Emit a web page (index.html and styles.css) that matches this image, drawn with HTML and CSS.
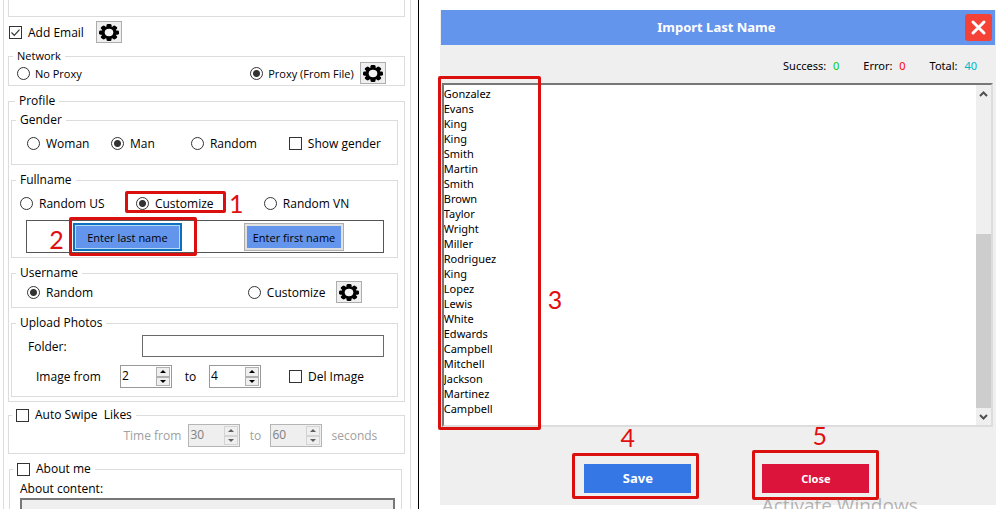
FILE: index.html
```
<!DOCTYPE html>
<html lang="en">
<head>
  <meta charset="UTF-8">
  <title>Import Last Name</title>
  <link rel="stylesheet" href="styles.css">
</head>
<body>

<!-- gear icon shared by the settings buttons -->
<svg width="0" height="0" class="sprite" aria-hidden="true">
  <symbol id="gear" viewBox="0 0 20 20" preserveAspectRatio="none">
    <g fill="#000">
      <rect x="7.500" y="0" width="5" height="20" rx="1.500"/>
      <rect x="7.500" y="0" width="5" height="20" rx="1.500" transform="rotate(45 10 10)"/>
      <rect x="7.500" y="0" width="5" height="20" rx="1.500" transform="rotate(90 10 10)"/>
      <rect x="7.500" y="0" width="5" height="20" rx="1.500" transform="rotate(135 10 10)"/>
      <circle cx="10" cy="10" r="7.500"/>
    </g>
    <circle cx="10" cy="10" r="4.300" fill="#f4f4f4"/>
  </symbol>
</svg>

<div class="page">
  <main class="settings">
    <div class="settings-inner">
      <div class="group-end"></div>

      <div class="email-row">
        <label><input type="checkbox" checked> Add Email</label>
        <button class="gear" aria-label="Email settings"><svg><use href="#gear"/></svg></button>
      </div>

      <fieldset class="network">
        <legend>Network</legend>
        <div class="network-row">
          <label><input type="radio" name="proxy"> No Proxy</label>
          <label><input type="radio" name="proxy" checked> Proxy (From File)</label>
          <button class="gear" aria-label="Proxy settings"><svg><use href="#gear"/></svg></button>
        </div>
      </fieldset>

      <fieldset class="profile">
        <legend>Profile</legend>

        <fieldset>
          <legend>Gender</legend>
          <div class="gender-row">
            <label><input type="radio" name="gender"> Woman</label>
            <label><input type="radio" name="gender" checked> Man</label>
            <label><input type="radio" name="gender"> Random</label>
            <label><input type="checkbox"> Show gender</label>
          </div>
        </fieldset>

        <fieldset>
          <legend>Fullname</legend>
          <div class="fullname-row">
            <label><input type="radio" name="fullname"> Random US</label>
            <label class="marked mark-1"><input type="radio" name="fullname" checked> Customize<span class="step">1</span></label>
            <label><input type="radio" name="fullname"> Random VN</label>
          </div>
          <div class="name-box">
            <div class="marked mark-2">
              <button class="name-btn active">Enter last name</button>
              <span class="step">2</span>
            </div>
            <button class="name-btn">Enter first name</button>
          </div>
        </fieldset>

        <fieldset>
          <legend>Username</legend>
          <div class="username-row">
            <label><input type="radio" name="username" checked> Random</label>
            <label><input type="radio" name="username"> Customize</label>
            <button class="gear" aria-label="Username settings"><svg><use href="#gear"/></svg></button>
          </div>
        </fieldset>

        <fieldset class="upload">
          <legend>Upload Photos</legend>
          <div class="folder-row">
            <label for="folder">Folder:</label>
            <input type="text" id="folder">
          </div>
          <div class="image-row">
            <label for="imgFrom">Image from</label>
            <div class="spinner">
              <input type="text" id="imgFrom" value="2">
              <div class="spin-btns"><button class="up" aria-label="Up"></button><button class="down" aria-label="Down"></button></div>
            </div>
            <label for="imgTo" class="to">to</label>
            <div class="spinner">
              <input type="text" id="imgTo" value="4">
              <div class="spin-btns"><button class="up" aria-label="Up"></button><button class="down" aria-label="Down"></button></div>
            </div>
            <label class="del"><input type="checkbox"> Del Image</label>
          </div>
        </fieldset>
      </fieldset>

      <fieldset class="swipe">
        <legend><label><input type="checkbox"> Auto Swipe&nbsp; Likes</label></legend>
        <div class="swipe-row">
          <label for="timeFrom">Time from</label>
          <div class="spinner disabled">
            <input type="text" id="timeFrom" value="30" disabled>
            <div class="spin-btns"><button class="up" aria-label="Up" disabled></button><button class="down" aria-label="Down" disabled></button></div>
          </div>
          <label for="timeTo" class="to">to</label>
          <div class="spinner disabled">
            <input type="text" id="timeTo" value="60" disabled>
            <div class="spin-btns"><button class="up" aria-label="Up" disabled></button><button class="down" aria-label="Down" disabled></button></div>
          </div>
          <span class="seconds">seconds</span>
        </div>
      </fieldset>

      <fieldset class="about">
        <legend><label><input type="checkbox"> About me</label></legend>
        <label for="about">About content:</label>
        <textarea id="about" disabled></textarea>
      </fieldset>
    </div>
  </main>

  <section class="import">
    <div class="window">
      <header class="title-bar">
        <h1>Import Last Name</h1>
        <button class="close-x" aria-label="Close window">
          <svg viewBox="0 0 27 27"><path d="M8 8L19 19M19 8L8 19" stroke="#fff" stroke-width="3" stroke-linecap="round"/></svg>
        </button>
      </header>

      <div class="stats">
        <div>Success: <span class="success">0</span></div>
        <div>Error: <span class="error">0</span></div>
        <div>Total: <span class="total">40</span></div>
      </div>

      <div class="list">
        <div class="marked mark-3"><span class="step">3</span></div>
        <textarea rows="22" aria-label="Last names">Gonzalez
Evans
King
King
Smith
Martin
Smith
Brown
Taylor
Wright
Miller
Rodriguez
King
Lopez
Lewis
White
Edwards
Campbell
Mitchell
Jackson
Martinez
Campbell</textarea>
        <div class="scrollbar">
          <button aria-label="Scroll up"><svg viewBox="0 0 15 17"><path d="M4 11L7.500 7.500L11 11" fill="none" stroke="#505050" stroke-width="2"/></svg></button>
          <div class="track"><div class="thumb"></div></div>
          <button aria-label="Scroll down"><svg viewBox="0 0 15 17"><path d="M4 7L7.500 10.500L11 7" fill="none" stroke="#505050" stroke-width="2"/></svg></button>
        </div>
      </div>

      <footer class="actions">
        <div class="marked mark-4">
          <button class="save">Save</button>
          <span class="step">4</span>
        </div>
        <div class="marked mark-5">
          <button class="close">Close</button>
          <span class="step">5</span>
        </div>
      </footer>
    </div>
    <div class="watermark">Activate Windows</div>
  </section>
</div>

</body>
</html>
```
FILE: styles.css
```
* {
  box-sizing: border-box;
}

body {
  margin: 0;
  background: #fff;
  color: #000;
  font-family: "Open Sans", "Noto Sans", sans-serif;
  font-size: 12px;
  line-height: 15px;
}

button, input, textarea {
  margin: 0;
  font: inherit;
  color: inherit;
}

button {
  padding: 0;
}

.sprite {
  position: absolute;
}

.page {
  display: grid;
  grid-template-columns: 5fr 7fr;
  height: 100vh;
  overflow: hidden;
}

/* Left settings panel */
.settings {
  padding: 0 7px 0 3px;
  border-right: 1px solid #000;
  overflow: hidden;
}

.settings-inner {
  min-height: 100vh;
  padding: 0 5px 0 4px;
  border: solid #dcdcdc;
  border-width: 0 1px;
}

fieldset {
  min-width: 0;
  margin: 9px 0 0;
  padding: 0;
  border: 1px solid #dcdcdc;
}

legend {
  height: 12px;
  margin-left: 4px;
  padding: 0 4px;
  line-height: 12px;
}

label {
  display: flex;
  align-items: center;
  gap: 6px;
  white-space: nowrap;
}

legend label {
  height: 12px;
}

input[type="radio"], input[type="checkbox"] {
  appearance: none;
  flex: none;
  width: 13px;
  height: 13px;
  border: 1px solid #333;
  background: #fff;
}

input[type="radio"] {
  border-radius: 50%;
}

input[type="radio"]:checked {
  background: radial-gradient(circle, #333 0 3px, #fff 4px);
}

input[type="checkbox"]:checked {
  background: #fff url("data:image/svg+xml,%3Csvg xmlns='http://www.w3.org/2000/svg' viewBox='0 0 11 11'%3E%3Cpath d='M1.500 5.500l2.800 2.800l5.200-5.600' fill='none' stroke='%23333' stroke-width='1.200'/%3E%3C/svg%3E");
}

.gear {
  width: 26px;
  height: 22px;
  border: 1px solid #adadad;
  background: #efefef;
}

.gear svg {
  display: block;
  width: 20px;
  height: 17px;
  margin: auto;
}

.group-end {
  height: 17px;
  border: 1px solid #dcdcdc;
  border-top: 0;
}

.email-row {
  display: flex;
  gap: 12px;
  margin-top: 4px;
  padding-left: 1px;
}

.network {
  margin-top: 7px;
  font-size: 11px;
}

.network-row {
  display: grid;
  grid-template-columns: 1fr auto auto;
  gap: 6px;
  padding: 0 18px 1px 8px;
}

.network-row label {
  gap: 5px;
}

.profile {
  padding: 0 6px 4px 2px;
}

.profile fieldset:nth-of-type(1) {
  margin-top: 7px;
}

.gender-row {
  display: grid;
  grid-template-columns: 84fr 80fr 98fr 108fr;
  height: 38px;
  padding: 0 0 4px 15px;
}

.fullname-row {
  display: grid;
  grid-template-columns: 116fr 128fr 133fr;
  height: 34px;
  padding-left: 8px;
}

.fullname-row label {
  justify-self: start;
}

.name-box {
  display: flex;
  justify-content: space-between;
  margin: 0 13px 4px 14px;
  padding: 2px 10% 1px 12%;
  border: 1px solid #555;
}

.name-btn {
  display: block;
  height: 28px;
  padding: 0 8px;
  border: 1px solid #adadad;
  outline: 2px solid #e1e1e1;
  outline-offset: -3px;
  background: #6495ed;
  font-size: 11px;
}

.name-btn.active {
  padding: 0 12px;
  border: 2px solid #0f6fbf;
  outline: 1px solid #b8dcf4;
  outline-offset: -3px;
}

.username-row {
  display: grid;
  grid-template-columns: 221fr 88fr 61fr;
  padding: 2px 0 4px 15px;
}

.upload {
  padding: 0 13px 8px 16px;
}

.upload legend {
  margin-left: -12px;
}

.folder-row {
  display: grid;
  grid-template-columns: 32% 1fr;
  margin-top: 6px;
}

.folder-row input {
  width: 100%;
  height: 22px;
  border: 1px solid #6a6a6a;
}

.image-row, .swipe-row {
  display: flex;
  align-items: center;
}

.image-row {
  margin-top: 8px;
  padding-left: 8px;
}

.image-row > label:first-child {
  flex: 0 0 84px;
}

.to {
  flex: 0 0 37px;
  justify-content: center;
}

.del {
  margin-left: 28px;
}

.spinner {
  display: flex;
  width: 52px;
  height: 23px;
  border: 1px solid #999;
  background: #fff;
}

.spinner input {
  flex: 1;
  min-width: 0;
  height: 18px;
  padding: 0 1px;
  border: 0;
  background: transparent;
}

.spin-btns {
  display: grid;
  width: 16px;
  padding: 1px;
}

.spin-btns button {
  display: grid;
  place-items: center;
  border: 1px solid #b0b0b0;
  background: #efefef;
}

.spin-btns button::before {
  content: "";
  border: solid transparent;
  border-width: 0 3px;
}

.spin-btns .up::before {
  border-bottom: 3px solid #000;
}

.spin-btns .down::before {
  border-top: 3px solid #000;
}

.spinner.disabled {
  border-color: #b5b5b5;
  background: #efefef;
  color: #808080;
}

.spinner.disabled button {
  border-color: #d4d4d4;
}

.spinner.disabled button::before {
  opacity: 0.6;
}

.swipe {
  margin-top: 7px;
}

.swipe legend {
  margin-left: 3px;
}

.swipe-row {
  padding: 3px 0 6px 29%;
  color: #a0a0a0;
}

.swipe-row > label:first-child {
  flex: 0 0 65px;
}

.swipe-row .to {
  flex-basis: 30px;
}

.seconds {
  margin-left: 9px;
}

.about {
  margin: 9px 3px 0 1px;
  padding: 6px 6px 0 10px;
}

.about legend {
  margin-left: -7px;
}

.about textarea {
  display: block;
  width: 100%;
  height: 40px;
  margin-top: 2px;
  border: 2px solid #777;
  background: #efefef;
  resize: none;
}

/* Import window */
.import {
  position: relative;
  padding: 10px 9px 0 21px;
}

.window {
  padding: 0 1px;
  background: #efefef;
}

.title-bar {
  display: flex;
  align-items: center;
  height: 35px;
  padding-right: 3px;
  background: #6495ed;
}

h1 {
  flex: 1;
  margin: 0;
  padding-left: 27px;
  color: #fff;
  font-family: "Noto Sans", sans-serif;
  font-size: 13px;
  text-align: center;
}

.close-x {
  width: 27px;
  height: 27px;
  border: 0;
  border-radius: 3px;
  background: #f44336;
}

.close-x svg {
  display: block;
}

.stats {
  display: flex;
  justify-content: flex-end;
  gap: 24px;
  height: 38px;
  padding: 13px 18px 0 0;
  font-family: "Noto Sans", sans-serif;
  font-size: 11px;
}

.stats span {
  margin-left: 4px;
}

.success {
  color: #0c1;
}

.error {
  color: #f00;
}

.total {
  color: #00b7c3;
}

.list {
  position: relative;
  display: flex;
  margin: 0 2px 0 1px;
  border: 2px solid #777;
  border-color: #777 #ddd #ddd #777;
  background: #fff;
}

.list textarea {
  flex: 1;
  min-width: 0;
  padding: 1px 0 9px;
  border: 0;
  outline: 0;
  background: transparent;
  font-family: "Noto Sans", sans-serif;
  font-size: 11px;
  overflow: hidden;
  resize: none;
}

.scrollbar {
  display: flex;
  flex-direction: column;
  width: 15px;
  background: #efefef;
}

.scrollbar button {
  height: 17px;
  border: 0;
  background: none;
}

.scrollbar svg {
  display: block;
}

.track {
  flex: 1;
  display: flex;
  align-items: flex-end;
}

.thumb {
  width: 100%;
  height: 57%;
  background: #cdcdcd;
}

.actions {
  display: grid;
  grid-template-columns: 1fr 1fr;
  gap: 71px;
  padding: 37px 0 12px 18px;
}

.mark-4 {
  justify-self: end;
}

.mark-5 {
  justify-self: start;
}

.save, .close {
  display: block;
  width: 107px;
  height: 29px;
  border: 0;
  background: #3578e5;
  color: #fff;
  font-family: "Noto Sans", sans-serif;
  font-size: 13px;
  font-weight: bold;
}

.close {
  background: #dc143c;
  font-size: 11px;
}

/* Numbered red frames drawn over the controls */
.marked {
  position: relative;
}

.marked::after {
  content: "";
  position: absolute;
  border: 3px solid #dc0f0f;
  border-radius: 2px;
  pointer-events: none;
}

.step {
  position: absolute;
  color: #e01010;
  font-family: Lato, sans-serif;
  font-size: 25px;
  line-height: 25px;
}

.mark-1::after {
  inset: 5px -12px 7px -11px;
}

.mark-1 .step {
  left: 93px;
}

.mark-2::after {
  inset: -6px -15px -5px -4px;
}

.mark-2 .step {
  left: -24px;
  top: 4px;
}

.mark-3 {
  position: absolute;
  inset: -9px auto -5px -6px;
  width: 103px;
}

.mark-3::after {
  inset: 0;
}

.mark-3 .step {
  left: 110px;
  top: 211px;
}

.mark-4::after {
  inset: -11px -8px -6px -12px;
}

.mark-4 .step {
  left: 36px;
  top: -39px;
}

.mark-5::after {
  inset: -14px -10px -7px -10px;
}

.mark-5 .step {
  left: 50px;
  top: -41px;
}

.watermark {
  position: absolute;
  left: 343px;
  top: 493px;
  color: rgba(110, 110, 110, 0.5);
  font-size: 19px;
  line-height: 24px;
  white-space: nowrap;
  pointer-events: none;
}
```
